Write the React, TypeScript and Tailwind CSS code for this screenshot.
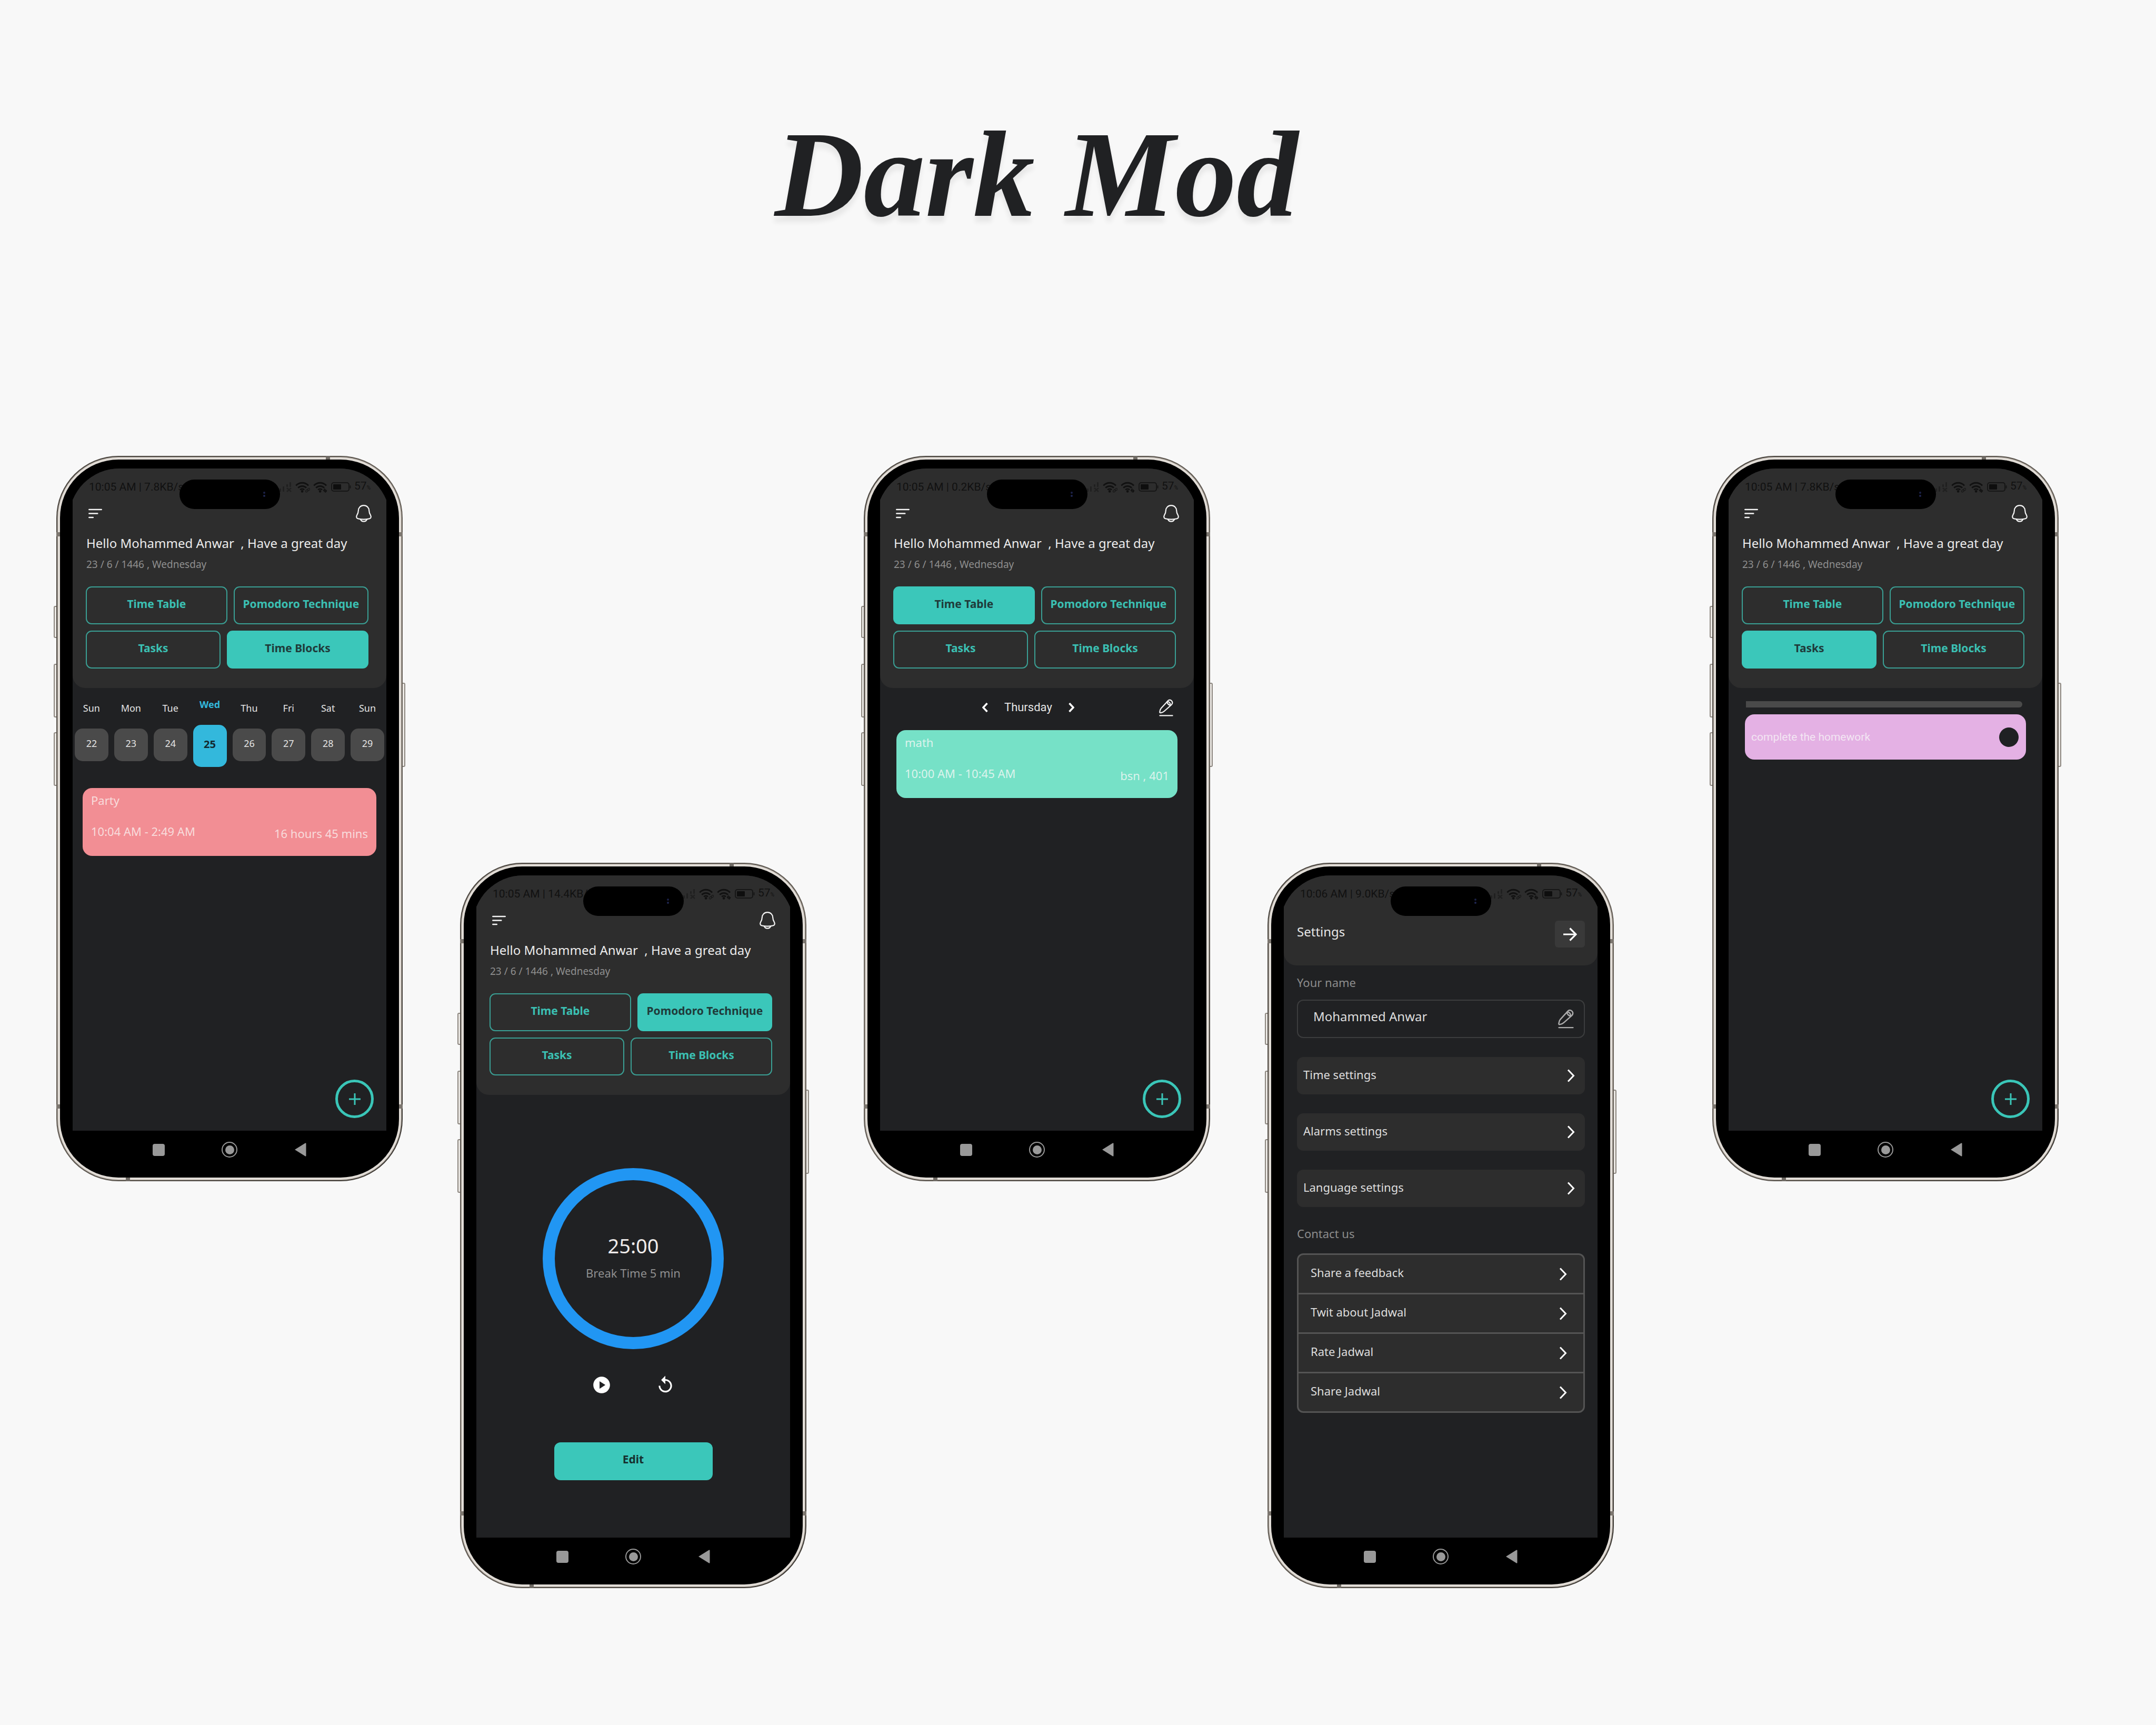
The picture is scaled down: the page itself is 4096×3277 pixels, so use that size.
import type { ReactNode } from "react";
import { MdPlayCircle, MdReplay } from "react-icons/md";

type Tab = "table" | "pomodoro" | "tasks" | "blocks";

function SignalIcon() {
  return (
    <svg viewBox="0 0 24 20" className="h-5 w-6" fill="#202020" aria-hidden="true">
      <rect x="0" y="13" width="3" height="6" rx="1" />
      <rect x="6" y="9" width="3" height="10" rx="1" />
      <rect x="13" y="5" width="3" height="5" rx="1" />
      <rect x="19" y="1" width="3" height="9" rx="1" />
      <path d="M14 12l8 7M22 12l-8 7" stroke="#202020" strokeWidth="2.4" />
    </svg>
  );
}

function WifiIcon({ variant }: { variant: "link" | "data" }) {
  return (
    <svg viewBox="0 0 32 24" className="h-[21px] w-7" fill="none" stroke="#111111" strokeWidth="3.400" aria-hidden="true">
      <path d="M1.500 8.500a18.500 18.500 0 0 1 27 0" />
      <path d="M6 13.500a12.500 12.500 0 0 1 18 0" />
      <path d="M10.500 17.500a7 7 0 0 1 9 0" />
      <circle cx="15" cy="21" r="2.600" fill="#111111" stroke="none" />
      {variant === "link" ? (
        <g stroke="#1a1a1a" strokeWidth="1.600">
          <rect x="22" y="18" width="6" height="4" rx="2" transform="rotate(-40 25 20)" />
          <rect x="26" y="15" width="6" height="4" rx="2" transform="rotate(-40 29 17)" />
        </g>
      ) : (
        <path d="M24.500 22.500v-6l-2.500 3.500M27 16.500v6l2.500-3.500" strokeWidth="2" />
      )}
    </svg>
  );
}

function BatteryIcon() {
  return (
    <svg viewBox="0 0 38 18" className="h-[18px] w-[38px]" aria-hidden="true">
      <rect x="1" y="1" width="33" height="16" rx="4" fill="none" stroke="#161616" strokeWidth="2" />
      <rect x="4" y="4" width="15" height="10" rx="1" fill="#0e0e0e" />
      <rect x="35.500" y="6" width="2" height="6" rx="1" fill="#161616" />
    </svg>
  );
}

function BellIcon() {
  return (
    <svg viewBox="0 0 30 33" className="h-[33px] w-[30px]" fill="none" stroke="#f5f5f5" strokeWidth="2.200" strokeLinecap="round" strokeLinejoin="round" aria-hidden="true">
      <path d="M15 1.200C9 1.200 5 5.500 4.800 11C4.700 15 4 16.500 2.300 19.200C.8 21.800.6 25.300 3.800 26.200C10.500 28 19.500 28 26.200 26.200C29.400 25.300 29.200 21.800 27.700 19.200C26 16.500 25.300 15 25.200 11C25 5.500 21 1.200 15 1.200Z" />
      <path d="M8.800 27.500C10 30.200 12.200 31.700 15 31.700C17.800 31.700 20 30.200 21.200 27.500" />
    </svg>
  );
}

function MenuIcon() {
  return (
    <svg viewBox="0 0 26 19" className="h-[19px] w-[26px]" stroke="#f5f5f5" strokeWidth="2.500" strokeLinecap="round" aria-hidden="true">
      <path d="M1.300 2h23.400M1.300 9.500h16M1.300 17h7.500" />
    </svg>
  );
}

function PenIcon({ className }: { className: string }) {
  return (
    <svg viewBox="0 0 28 34" className={className} fill="none" stroke="currentColor" strokeWidth="2.300" strokeLinecap="round" strokeLinejoin="round" aria-hidden="true">
      <path d="M15.500 5.500L4 18C2.500 19.800 1.600 22.500 1.300 25.300C1.200 26.700 2 27.200 3.300 26.900C6 26.400 8.700 25.300 10.300 23.700L24.300 11.300C26.500 9 27 6.300 25 3.700C22.500.8 19 .8 16.800 4Z" />
      <path d="M15.500 5.500C16.500 9 19 11.500 22.500 12.500M16 5C19.500 4.500 22.500 7.500 22.500 12" />
      <path d="M1.500 32.500h25" />
    </svg>
  );
}

function Chevron({ className, flip = false, weight = 3 }: { className: string; flip?: boolean; weight?: number }) {
  return (
    <svg viewBox="0 0 15 25" className={className} fill="none" stroke="#ffffff" strokeWidth={weight} aria-hidden="true">
      <path d={flip ? "M13 1.500L2.500 12.500L13 23.500" : "M2 1.500L12.500 12.500L2 23.500"} />
    </svg>
  );
}

function StatusBar({ text }: { text: string }) {
  return (
    <div className="flex h-[26px] items-center justify-between pr-[30px] pl-[31px] font-[Roboto,sans-serif] text-[21px] leading-[26px] text-[#111111]">
      <span className="whitespace-nowrap">{text}</span>
      <div className="flex items-center gap-[6px]">
        <SignalIcon />
        <WifiIcon variant="link" />
        <WifiIcon variant="data" />
        <BatteryIcon />
        <span>
          57<span className="text-[10px]">%</span>
        </span>
      </div>
    </div>
  );
}

function NavBar() {
  return (
    <div className="flex h-[89px] items-start justify-center gap-[105px] pt-[21px]">
      <button aria-label="Recent apps" className="flex size-[30px] items-center justify-center">
        <span className="size-[23px] rounded-[4px] bg-[#999999]" />
      </button>
      <button aria-label="Home" className="flex size-[30px] items-center justify-center rounded-full border-2 border-[#999999]">
        <span className="size-[17px] rounded-full bg-[#999999]" />
      </button>
      <button aria-label="Back" className="flex size-[30px] items-center justify-center">
        <svg viewBox="0 0 22 26" className="h-[26px] w-[22px]" fill="#999999" aria-hidden="true">
          <path d="M0 13L20 .5Q21.500 0 21.500 1.500V24.500Q21.500 26 20 25.500Z" />
        </svg>
      </button>
    </div>
  );
}

function Phone({ status, header, children, lower = false, last = false }: { status: string; header: ReactNode; children: ReactNode; lower?: boolean; last?: boolean }) {
  return (
    <section className={`relative min-w-0 flex-1 ${lower ? "mt-[773px]" : ""} ${last ? "ml-[78px]" : ""}`}>
      <span className="absolute top-[285px] -left-[5px] h-[61px] w-[8px] rounded-l-[3px] border-2 border-[#8d8780] bg-[#ece9e5]" />
      <span className="absolute top-[395px] -left-[5px] h-[102px] w-[8px] rounded-l-[3px] border-2 border-[#8d8780] bg-[#ece9e5]" />
      <span className="absolute top-[525px] -left-[5px] h-[102px] w-[8px] rounded-l-[3px] border-2 border-[#8d8780] bg-[#ece9e5]" />
      <span className="absolute top-[431px] -right-[5px] h-[160px] w-[8px] rounded-r-[3px] border-2 border-[#8d8780] bg-[#ece9e5]" />

      <div className="relative rounded-[118px] bg-[linear-gradient(135deg,#47423c,#6f6860_50%,#3a3631)] p-[2px]">
        <div className="rounded-[116px] bg-[#a29b93] p-[1px]">
          <div className="rounded-[115px] bg-[#e2ddd7] p-[4px]">
            <div className="rounded-[111px] bg-black px-[17px] pt-[17px]">
              <div className="overflow-hidden rounded-t-[96px] px-[7px]">
                <div className="flex min-h-[1258px] flex-col bg-[#202123]">
                  <header className="rounded-b-[24px] bg-[#2d2d2d] pt-[22px]">
                    <StatusBar text={status} />
                    {header}
                  </header>
                  {children}
                </div>
              </div>
              <NavBar />
            </div>
          </div>
        </div>
        <span className="absolute top-0 left-[512px] h-[7px] w-[8px] bg-[#6f6a64]" />
        <span className="absolute bottom-0 left-[132px] h-[7px] w-[8px] bg-[#6f6a64]" />
        <span className="absolute top-[145px] left-0 h-[8px] w-[7px] bg-[#7d7770]" />
        <span className="absolute top-[145px] right-0 h-[8px] w-[7px] bg-[#7d7770]" />
        <span className="absolute bottom-[138px] left-0 h-[8px] w-[7px] bg-[#7d7770]" />
        <span className="absolute right-0 bottom-[138px] h-[8px] w-[7px] bg-[#7d7770]" />
        <div className="absolute top-[45px] left-[234px] h-[56px] w-[191px] rounded-full bg-black">
          <span className="absolute top-[23px] right-[28px] size-[4px] rounded-full bg-[#1c2247]" />
          <span className="absolute top-[29px] right-[28px] size-[4px] rounded-full bg-[#1f2650]" />
        </div>
      </div>
    </section>
  );
}

function TabButton({ active, wide = false, children }: { active: boolean; wide?: boolean; children: ReactNode }) {
  return (
    <button
      aria-pressed={active}
      className={`flex h-[72px] min-w-0 items-center justify-center rounded-[11px] border-2 pb-[6px] text-[21px] leading-[28px] font-bold whitespace-nowrap ${wide ? "flex-[21]" : "flex-[20]"} ${
        active ? "border-[#3bc7ba] bg-[#3bc7ba] text-[#1f3b3a]" : "border-[#3a9f94] text-[#3bc0b3]"
      }`}
    >
      {children}
    </button>
  );
}

function HomeHeader({ tab }: { tab: Tab }) {
  return (
    <>
      <div className="mt-[21px] flex items-center justify-between pr-[28px] pl-[30px]">
        <button aria-label="Menu">
          <MenuIcon />
        </button>
        <button aria-label="Notifications">
          <BellIcon />
        </button>
      </div>
      <h2 className="mt-[24px] pl-[26px] text-[24px] leading-[32px] whitespace-pre text-[#ececec]">{"Hello Mohammed Anwar  , Have a great day"}</h2>
      <p className="mt-[12px] pl-[26px] text-[19px] leading-[24px] text-[#8f8f8f]">23 / 6 / 1446 , Wednesday</p>
      <nav className="mt-[30px] flex flex-col gap-[12px] pr-[34px] pb-[37px] pl-[25px]">
        <div className="flex gap-[12px]">
          <TabButton wide active={tab === "table"}>Time Table</TabButton>
          <TabButton active={tab === "pomodoro"}>Pomodoro Technique</TabButton>
        </div>
        <div className="flex gap-[12px]">
          <TabButton active={tab === "tasks"}>Tasks</TabButton>
          <TabButton wide active={tab === "blocks"}>Time Blocks</TabButton>
        </div>
      </nav>
    </>
  );
}

function AddButton() {
  return (
    <button aria-label="Add" className="mt-auto mr-[24px] mb-[24px] flex size-[73px] items-center justify-center self-end rounded-full border-[5px] border-[#3ac6b8]">
      <svg viewBox="0 0 22 22" className="size-[22px]" stroke="#3ac6b8" strokeWidth="3" aria-hidden="true">
        <path d="M11 0v22M0 11h22" />
      </svg>
    </button>
  );
}

function EventCard({ title, time, note, className }: { title: string; time: string; note: string; className: string }) {
  return (
    <article className={`rounded-[18px] px-[16px] pt-[9px] pb-[29px] text-[22px] leading-[28px] ${className}`}>
      <h3>{title}</h3>
      <div className="mt-[31px] flex justify-between">
        <span>{time}</span>
        <span className="mt-[4px]">{note}</span>
      </div>
    </article>
  );
}

const days = [
  ["Sun", "22"],
  ["Mon", "23"],
  ["Tue", "24"],
  ["Wed", "25"],
  ["Thu", "26"],
  ["Fri", "27"],
  ["Sat", "28"],
  ["Sun", "29"],
];

function WeekStrip() {
  return (
    <div className="mt-[19px] grid grid-cols-8 gap-[11px] px-[4px] text-center text-[18px] leading-[24px] text-[#e4e4e4]">
      {days.map(([day, date]) =>
        date === "25" ? (
          <div key={date}>
            <div className="font-bold text-[#33b8dc]">{day}</div>
            <button className="mt-[27px] flex h-[80px] w-full items-center justify-center rounded-[15px] bg-[#33b8dc] pb-[6px] text-[20px] font-bold text-[#12292f]">{date}</button>
          </div>
        ) : (
          <div key={date} className="pt-[7px]">
            <div>{day}</div>
            <button className="mt-[27px] flex h-[62px] w-full items-center justify-center rounded-[15px] bg-[#4a4a4a] pb-[6px]">{date}</button>
          </div>
        ),
      )}
    </div>
  );
}

function SettingRow({ children }: { children: ReactNode }) {
  return (
    <button className="mt-[36px] flex h-[71px] items-center justify-between rounded-[12px] bg-[#2d2d2d] pr-[19px] pl-[12px]">
      <span className="pb-[6px] text-[22px] leading-[28px] text-[#dedede]">{children}</span>
      <Chevron className="h-[25px] w-[15px]" />
    </button>
  );
}

const contacts = ["Share a feedback", "Twit about Jadwal", "Rate Jadwal", "Share Jadwal"];

export default function App() {
  return (
    <main className="min-h-screen bg-[#f8f8f8] pt-[214px] font-['Noto_Sans',sans-serif]">
      <h1 className="pr-[158px] text-center font-['Liberation_Serif',serif] text-[234px] leading-none font-bold text-[#202123] italic [text-shadow:0_12px_10px_rgba(0,0,0,0.07)]">
        Dark Mod
      </h1>

      <div className="mt-[418px] flex items-start gap-[109px] pr-[185px] pl-[107px]">
        <Phone status="10:05 AM | 7.8KB/s" header={<HomeHeader tab="blocks" />}>
          <WeekStrip />
          <EventCard title="Party" time="10:04 AM - 2:49 AM" note="16 hours 45 mins" className="mx-[19px] mt-[40px] bg-[#f28e94] text-[#f8dcdc]" />
          <AddButton />
        </Phone>

        <Phone lower status="10:05 AM | 14.4KB/s" header={<HomeHeader tab="pomodoro" />}>
          <div className="mt-[139px] flex flex-col items-center">
            <div className="size-[344px] rounded-full border-[23px] border-[#2196f3] pt-[100px] text-center">
              <div className="text-[38px] leading-[48px] text-[#eeebea]">25:00</div>
              <div className="mt-[14px] text-[22px] leading-[28px] text-[#8f8f8f]">Break Time 5 min</div>
            </div>
            <div className="mt-[49px] flex gap-[83px] text-white">
              <button aria-label="Start">
                <MdPlayCircle className="size-[38px]" />
              </button>
              <button aria-label="Reset">
                <MdReplay className="size-[38px]" />
              </button>
            </div>
            <button className="mt-[90px] h-[72px] w-[301px] rounded-[12px] bg-[#3bc7ba] pb-[6px] text-[21px] font-bold text-[#16302f]">Edit</button>
          </div>
        </Phone>

        <Phone status="10:05 AM | 0.2KB/s" header={<HomeHeader tab="table" />}>
          <div className="mt-[19px] flex h-[36px] items-center pr-[39px] pl-[194px]">
            <button aria-label="Previous day">
              <Chevron flip weight={5} className="h-[18px] w-[11px]" />
            </button>
            <span className="px-[31px] font-[Roboto,sans-serif] text-[22px] leading-[28px] text-[#e4e4e4]">Thursday</span>
            <button aria-label="Next day">
              <Chevron weight={5} className="h-[18px] w-[11px]" />
            </button>
            <button aria-label="Edit day" className="ml-auto text-[#f0f0f0]">
              <PenIcon className="h-[33px] w-[27px]" />
            </button>
          </div>
          <EventCard title="math" time="10:00 AM - 10:45 AM" note="bsn , 401" className="mx-[31px] mt-[25px] bg-[#76e1c7] text-[#dcf3ec]" />
          <AddButton />
        </Phone>

        <Phone
          lower
          status="10:06 AM | 9.0KB/s"
          header={
            <div className="mt-[38px] flex items-center justify-between pr-[24px] pb-[34px] pl-[25px]">
              <h2 className="pb-[10px] text-[24px] leading-[32px] text-[#e6e6e6]">Settings</h2>
              <button aria-label="Back to home" className="flex h-[51px] w-[57px] items-center justify-center rounded-[6px] bg-[#393939]">
                <svg viewBox="0 0 26 26" className="size-[26px]" fill="none" stroke="#ffffff" strokeWidth="3.200" aria-hidden="true">
                  <path d="M0 13h23.500M12.500 1.500L24 13L12.500 24.500" />
                </svg>
              </button>
            </div>
          }
        >
          <div className="flex flex-col pr-[24px] pl-[25px]">
            <label htmlFor="user-name" className="mt-[18px] text-[22px] leading-[28px] text-[#8c8c8c]">
              Your name
            </label>
            <div className="mt-[19px] flex h-[73px] items-center rounded-[12px] border-2 border-[#3c3d3e] pr-[19px] pl-[29px] text-[#acacac]">
              <input id="user-name" defaultValue="Mohammed Anwar" className="min-w-0 flex-1 bg-transparent pb-[10px] text-[24px] leading-[32px] text-[#dedede] outline-none" />
              <PenIcon className="h-[37px] w-[30px]" />
            </div>
            <SettingRow>Time settings</SettingRow>
            <SettingRow>Alarms settings</SettingRow>
            <SettingRow>Language settings</SettingRow>
            <h3 className="mt-[36px] text-[22px] leading-[28px] text-[#8c8c8c]">Contact us</h3>
            <ul className="mt-[24px] divide-y-[3px] divide-[#545454] overflow-hidden rounded-[12px] border-[3px] border-[#545454] bg-[#2d2d2d]">
              {contacts.map((label) => (
                <li key={label}>
                  <a href="#" className="flex h-[72px] items-center justify-between pr-[31px] pl-[23px]">
                    <span className="pb-[6px] text-[22px] leading-[28px] text-[#dedede]">{label}</span>
                    <Chevron className="h-[25px] w-[15px]" />
                  </a>
                </li>
              ))}
            </ul>
          </div>
        </Phone>

        <Phone last status="10:05 AM | 7.8KB/s" header={<HomeHeader tab="tasks" />}>
          <div className="mt-[25px] mr-[38px] ml-[33px] h-[12px] rounded-r-full bg-[#4a4a4a]" />
          <div className="mx-[31px] mt-[13px] flex h-[86px] items-center justify-between rounded-[18px] bg-[#e4b1e4] pr-[14px] pl-[12px]">
            <label htmlFor="homework" className="font-[Roboto,sans-serif] text-[21px] leading-[28px] text-[#f3e6f3]">
              complete the homework
            </label>
            <input id="homework" type="checkbox" className="size-[37px] appearance-none rounded-full bg-[#1f2123]" />
          </div>
          <AddButton />
        </Phone>
      </div>
    </main>
  );
}
